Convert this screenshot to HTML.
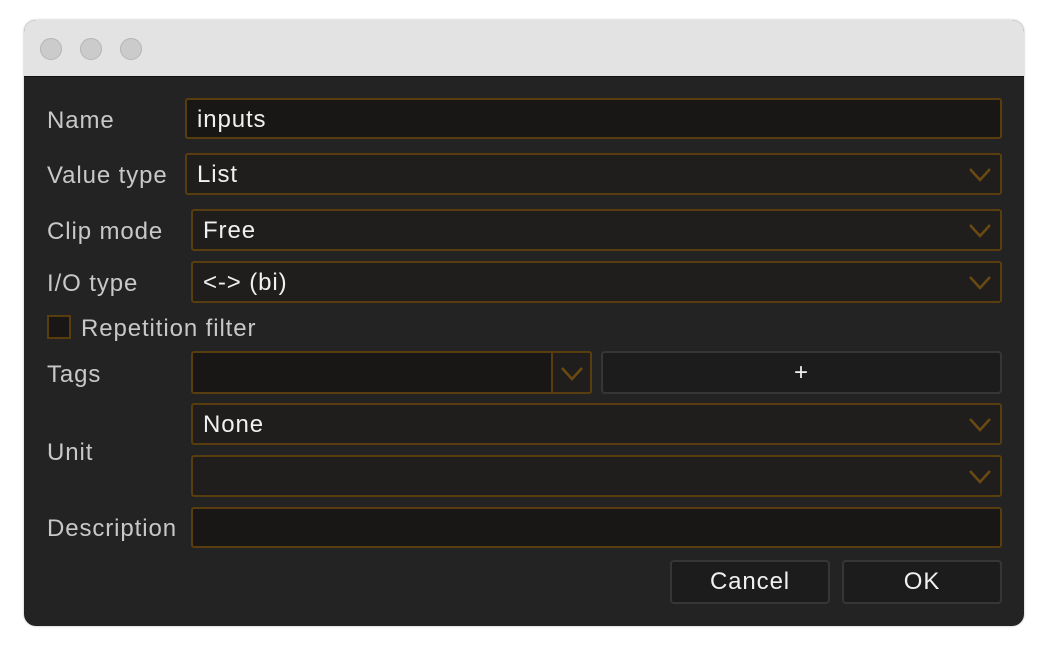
<!DOCTYPE html>
<html><head><style>
body{margin:0;width:1048px;height:648px;background:#fff;font-family:"Liberation Sans","DejaVu Sans",sans-serif;overflow:hidden;position:relative}
.win{position:absolute;left:24px;top:20px;width:1000px;height:606px;border-radius:12px;overflow:hidden;background:#232323;box-shadow:0 0 2px rgba(0,0,0,.3)}
.tb{position:absolute;left:0;top:0;width:1000px;height:56px;background:#e3e3e3;border-bottom:1px solid #111}
.dot{position:absolute;top:18px;width:22px;height:22px;border-radius:50%;background:#cbcbcb;border:1px solid #b5b5b5;box-sizing:border-box}
.a{position:absolute}
.lbl{position:absolute;color:#c8c8c8;font-size:24px;letter-spacing:0.9px;line-height:28px}
.f{position:absolute;box-sizing:border-box;border:2px solid #5a3d0e;border-radius:3px;background:#1f1e1d;color:#f0f0f0;font-size:24px;letter-spacing:0.9px;line-height:39px;padding-left:10px}
.dark{background:#181716}
.chev{position:absolute;right:9px;top:12px}
.btn{position:absolute;box-sizing:border-box;border:2px solid #363636;border-radius:4px;background:#1c1c1c;color:#f0f0f0;font-size:24px;letter-spacing:0.9px;text-align:center;line-height:40px}
</style></head><body>
<div class="win">
<div class="tb"><div class="dot" style="left:16px"></div><div class="dot" style="left:56px"></div><div class="dot" style="left:96px"></div></div>
</div>
<div class="lbl" style="left:47px;top:107px">Name</div>
<div class="f dark" style="left:185px;top:98px;width:817px;height:41px">inputs</div>
<div class="lbl" style="left:47px;top:162px">Value type</div>
<div class="f" style="left:185px;top:153px;width:817px;height:42px">List<svg class="chev" width="22" height="16"><path d="M1 2 L11 13 L21 2" stroke="#6b4a12" stroke-width="2.5" fill="none"/></svg></div>
<div class="lbl" style="left:47px;top:218px">Clip mode</div>
<div class="f" style="left:191px;top:209px;width:811px;height:42px">Free<svg class="chev" width="22" height="16"><path d="M1 2 L11 13 L21 2" stroke="#6b4a12" stroke-width="2.5" fill="none"/></svg></div>
<div class="lbl" style="left:47px;top:270px">I/O type</div>
<div class="f" style="left:191px;top:261px;width:811px;height:42px">&lt;-&gt; (bi)<svg class="chev" width="22" height="16"><path d="M1 2 L11 13 L21 2" stroke="#6b4a12" stroke-width="2.5" fill="none"/></svg></div>
<div class="a" style="left:47px;top:315px;width:24px;height:24px;box-sizing:border-box;border:2px solid #5a3d0e;background:#181716"></div>
<div class="lbl" style="left:81px;top:315px">Repetition filter</div>
<div class="lbl" style="left:47px;top:361px">Tags</div>
<div class="f dark" style="left:191px;top:351px;width:401px;height:43px;padding:0"></div>
<div class="a" style="left:551px;top:351px;width:41px;height:43px;box-sizing:border-box;border:2px solid #5a3d0e;border-radius:0 3px 3px 0;background:#1f1e1d"><svg style="position:absolute;left:8px;top:13px" width="22" height="16"><path d="M1 2 L11 13 L21 2" stroke="#6b4a12" stroke-width="2.5" fill="none"/></svg></div>
<div class="btn" style="left:601px;top:351px;width:401px;height:43px">+</div>
<div class="lbl" style="left:47px;top:439px">Unit</div>
<div class="f" style="left:191px;top:403px;width:811px;height:42px">None<svg class="chev" width="22" height="16"><path d="M1 2 L11 13 L21 2" stroke="#6b4a12" stroke-width="2.5" fill="none"/></svg></div>
<div class="f" style="left:191px;top:455px;width:811px;height:42px"><svg class="chev" width="22" height="16"><path d="M1 2 L11 13 L21 2" stroke="#6b4a12" stroke-width="2.5" fill="none"/></svg></div>
<div class="lbl" style="left:47px;top:515px">Description</div>
<div class="f dark" style="left:191px;top:507px;width:811px;height:41px"></div>
<div class="btn" style="left:670px;top:560px;width:160px;height:44px">Cancel</div>
<div class="btn" style="left:842px;top:560px;width:160px;height:44px">OK</div>
</body></html>
